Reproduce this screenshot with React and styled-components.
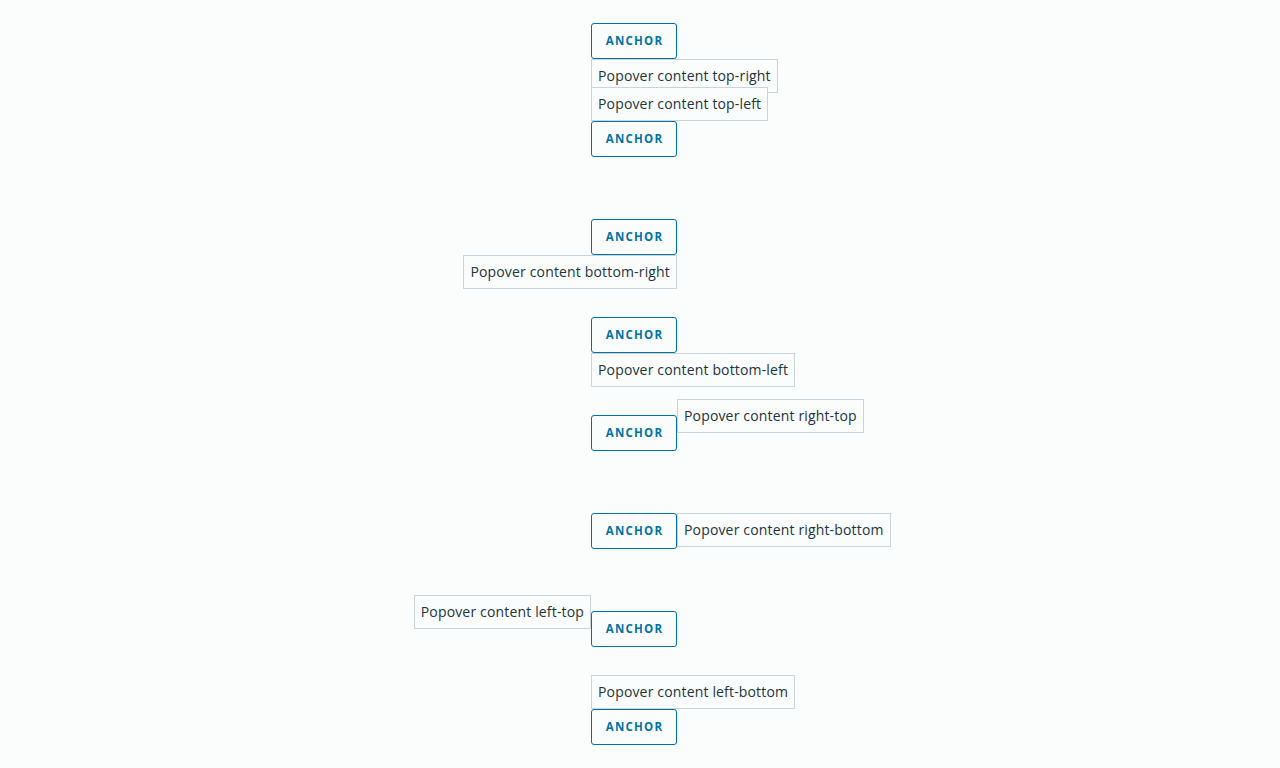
import React from "react";
import styled, { createGlobalStyle, css } from "styled-components";

const GlobalStyle = createGlobalStyle`
  html, body {
    margin: 0;
    padding: 0;
    background: #fbfdfd;
  }
  body {
    font-family: "Open Sans", "Liberation Sans", sans-serif;
    color: #21333b;
  }
`;

const PLACEMENTS = [
  "top-right",
  "top-left",
  "bottom-right",
  "bottom-left",
  "right-top",
  "right-bottom",
  "left-top",
  "left-bottom",
];

const App = () => {
  return (
    <>
      <GlobalStyle />
      <Page>
        {PLACEMENTS.map((p) => (
          <Row key={p}>
            <AnchorWrap>
              <Anchor type="button">Anchor</Anchor>
              <Popover $placement={p}>Popover content {p}</Popover>
            </AnchorWrap>
          </Row>
        ))}
      </Page>
    </>
  );
};

const Page = styled.div`
  display: flex;
  flex-direction: column;
  gap: 62px;
  padding: 23px 0 0 591px;
  min-height: 768px;
  box-sizing: border-box;
`;

const Row = styled.div`
  display: flex;
`;

const AnchorWrap = styled.div`
  position: relative;
  display: inline-flex;
`;

const Anchor = styled.button`
  width: 86px;
  height: 36px;
  box-sizing: border-box;
  border: 1px solid #0072a3;
  border-radius: 3px;
  background: transparent;
  color: #0072a3;
  font-family: "Open Sans", "Liberation Sans", sans-serif;
  font-size: 11.5px;
  line-height: 14px;
  font-weight: 700;
  letter-spacing: 1.2px;
  text-transform: uppercase;
  padding: 0 0 1px 1px;
  cursor: pointer;
`;

const placements = {
  "top-right": css`
    top: 100%;
    left: 0;
  `,
  "top-left": css`
    bottom: 100%;
    left: 0;
  `,
  "bottom-right": css`
    top: 100%;
    right: 0;
  `,
  "bottom-left": css`
    top: 100%;
    left: 0;
  `,
  "right-top": css`
    bottom: 50%;
    left: 100%;
  `,
  "right-bottom": css`
    top: 0;
    left: 100%;
  `,
  "left-top": css`
    bottom: 50%;
    right: 100%;
  `,
  "left-bottom": css`
    bottom: 100%;
    left: 0;
  `,
};

const Popover = styled.div`
  position: absolute;
  ${(p) => placements[p.$placement]}
  white-space: nowrap;
  box-sizing: border-box;
  height: 34px;
  padding: 6px 6px;
  border: 1px solid #cbd4d8;
  background: #fbfdfd;
  font-size: 14px;
  line-height: 20px;
  letter-spacing: 0.16px;
  color: #21333b;
`;

export default App;
